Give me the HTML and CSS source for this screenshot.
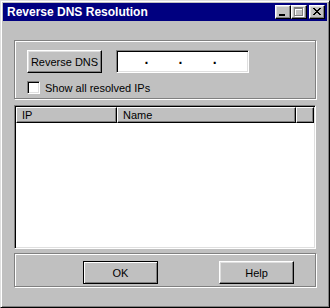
FILE: index.html
```html
<!DOCTYPE html>
<html lang="en">
<head>
  <meta charset="UTF-8">
  <title>Reverse DNS Resolution</title>
  <link rel="stylesheet" href="styles.css">
</head>
<body>
  <div class="window">
    <div class="titlebar">
      <span class="title">Reverse DNS Resolution</span>
      <div class="title-buttons">
        <button class="tbtn">
          <svg width="14" height="12" shape-rendering="crispEdges"><rect x="3" y="8" width="6" height="2" fill="#000"/></svg>
        </button>
        <button class="tbtn">
          <svg width="14" height="12" shape-rendering="crispEdges">
            <path d="M3 2h9v9H3z M4 4v6h7V4z" fill="#fff" fill-rule="evenodd"/>
            <path d="M2 1h9v9H2z M3 3v6h7V3z" fill="#808080" fill-rule="evenodd"/>
          </svg>
        </button>
        <button class="tbtn close">
          <svg width="14" height="12" shape-rendering="crispEdges">
            <path transform="translate(3 2)" d="M0 0h2v1H0z M6 0h2v1H6z M1 1h2v1H1z M5 1h2v1H5z M2 2h4v1H2z M3 3h2v1H3z M2 4h4v1H2z M1 5h2v1H1z M5 5h2v1H5z M0 6h2v1H0z M6 6h2v1H6z" fill="#000"/>
          </svg>
        </button>
      </div>
    </div>

    <div class="content">
      <div class="group top-group">
        <div class="row">
          <button class="btn">Reverse DNS</button>
          <div class="ipfield">
            <span class="octet first"></span><span class="dot">.</span>
            <span class="octet"></span><span class="dot">.</span>
            <span class="octet"></span><span class="dot">.</span>
            <span class="octet"></span>
          </div>
        </div>
        <label class="check"><span class="box"></span>Show all resolved IPs</label>
      </div>

      <div class="listview">
        <div class="lv-header">
          <div class="col col-ip">IP</div>
          <div class="col col-name">Name</div>
          <div class="col col-rest"></div>
        </div>
        <div class="lv-rows"></div>
      </div>

      <div class="group bottom-group">
        <button class="btn default">OK</button>
        <button class="btn">Help</button>
      </div>
    </div>
  </div>
</body>
</html>
```

FILE: styles.css
```css
body { margin: 0; font-family: "Liberation Sans", Arial, sans-serif; font-size: 11px; color: #000; }

.window { width: 330px; height: 308px; box-sizing: border-box; background: #c0c0c0; padding: 2px;
  border: 1px solid; border-color: #dfdfdf #000 #000 #dfdfdf;
  box-shadow: inset 1px 1px #fff, inset -1px -1px #808080; display: flex; flex-direction: column; }

.titlebar { height: 18px; background: #000080; color: #fff; display: flex; align-items: center; justify-content: space-between; padding: 0 2px 0 4px; }
.title { font-weight: bold; font-size: 12px; }
.title-buttons { display: flex; }
.tbtn { width: 16px; height: 14px; padding: 0; box-sizing: border-box; background: #c0c0c0; display: block;
  border: 1px solid; border-color: #fff #000 #000 #fff; box-shadow: inset -1px -1px #808080, inset 1px 1px #dfdfdf; }
.tbtn svg { display: block; }
.tbtn.close { margin-left: 2px; }

.content { padding: 19px 11px 0 11px; display: flex; flex-direction: column; }

.group { box-sizing: border-box; border: 1px solid #808080; box-shadow: 1px 1px 0 #fff, inset 1px 1px 0 #fff; }
.top-group { height: 59px; padding: 9px 12px 0 12px; }
.row { display: flex; gap: 14px; }

.btn { width: 75px; height: 23px; box-sizing: border-box; padding: 0; background: #c0c0c0; font: inherit; color: #000;
  border: 1px solid; border-color: #fff #000 #000 #fff; box-shadow: inset -1px -1px #808080, inset 1px 1px #dfdfdf; }
.btn.default { border-color: #000; box-shadow: inset 1px 1px #fff, inset -1px -1px #808080; }

.ipfield { width: 133px; height: 23px; box-sizing: border-box; background: #fff; display: flex; align-items: center; padding: 0 1px;
  border: 1px solid; border-color: #808080 #fff #fff #808080; box-shadow: inset 1px 1px #000, inset -1px -1px #dfdfdf; }
.octet { width: 31px; }
.octet.first { width: 27px; }
.dot { width: 4px; text-align: center; font-weight: bold; font-size: 14px; line-height: 14px; margin-top: -6px; color: #000; }

.check { display: flex; align-items: center; gap: 5px; margin-top: 8px; height: 13px; }
.box { width: 13px; height: 13px; box-sizing: border-box; background: #fff;
  border: 1px solid; border-color: #808080 #fff #fff #808080; box-shadow: inset 1px 1px #000, inset -1px -1px #dfdfdf; }

.listview { margin-top: 6px; height: 144px; box-sizing: border-box; background: #fff; padding: 1px;
  border: 1px solid; border-color: #808080 #fff #fff #808080; box-shadow: inset 1px 1px #000, inset -1px -1px #dfdfdf;
  display: flex; flex-direction: column; }
.lv-header { display: flex; height: 16px; }
.col { box-sizing: border-box; background: #c0c0c0; padding-left: 5px; line-height: 14px;
  border: 1px solid; border-color: #fff #000 #000 #fff; box-shadow: inset -1px -1px #808080; }
.col-ip { width: 101px; }
.col-name { width: 179px; }
.col-rest { flex: 1; }
.lv-rows { flex: 1; }

.bottom-group { margin-top: 4px; height: 34px; padding: 7px 0 0 68px; display: flex; gap: 61px; }
```
